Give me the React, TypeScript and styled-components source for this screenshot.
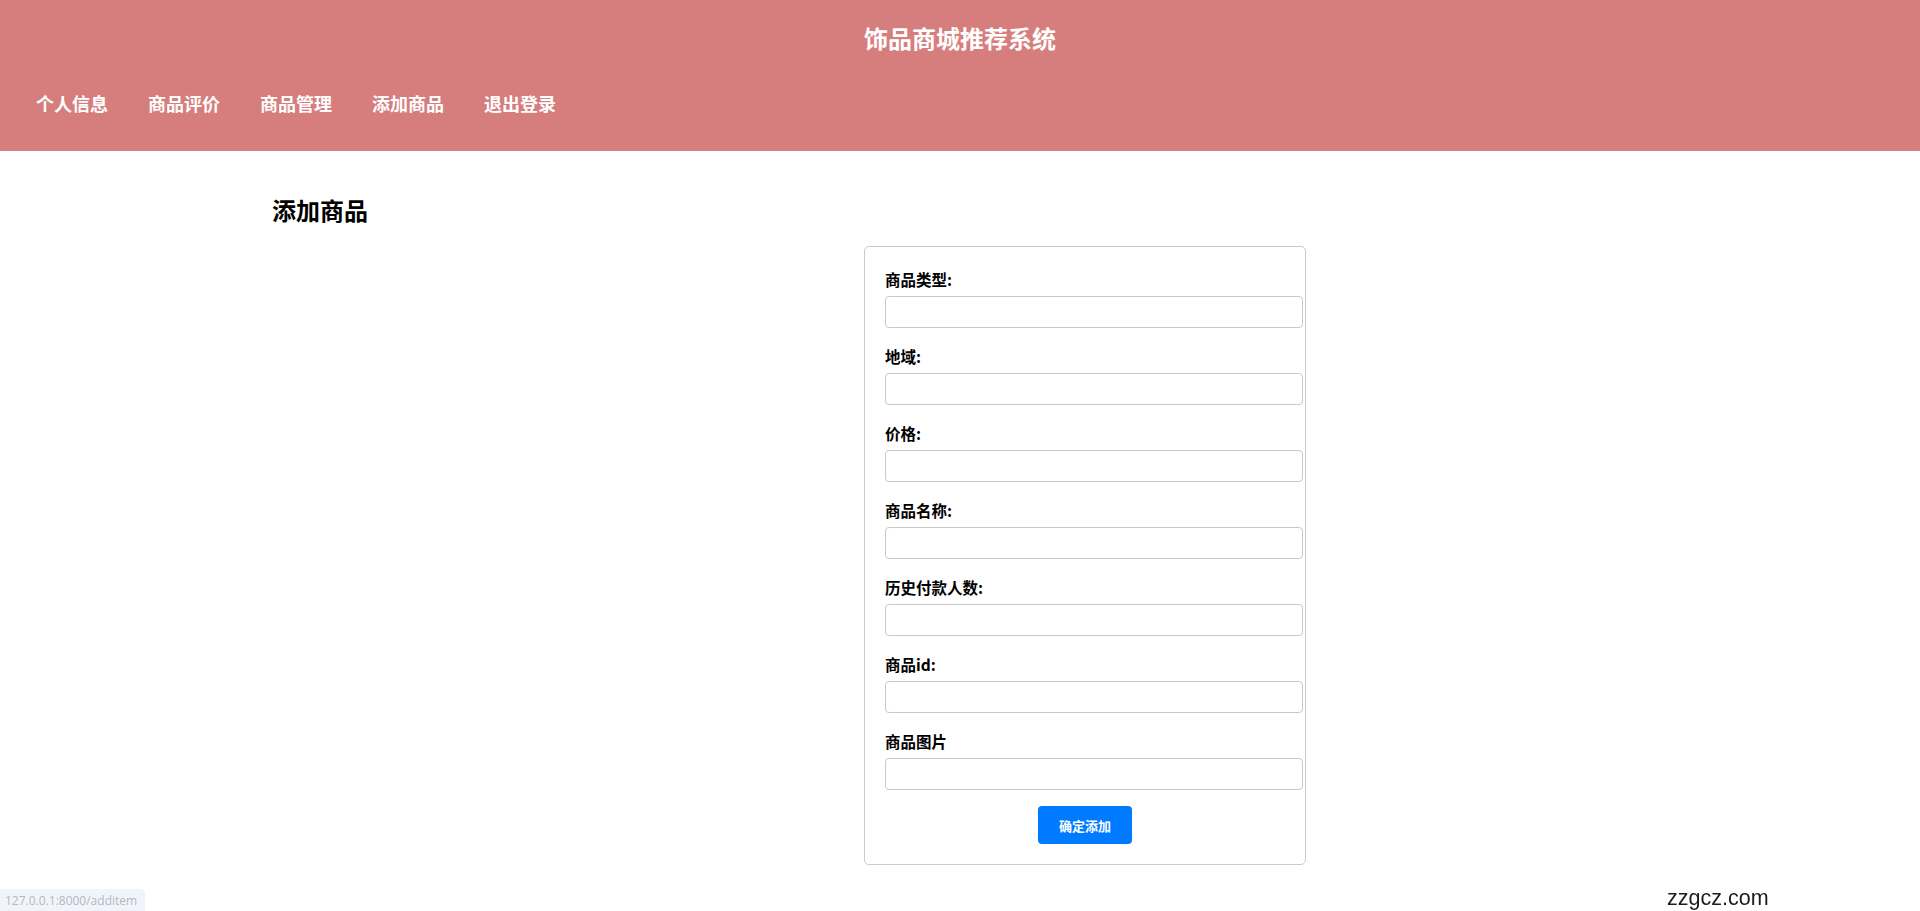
import React, { useState } from 'react'
import styled, { createGlobalStyle } from 'styled-components'

const GlobalStyle = createGlobalStyle`
	html, body {
		margin: 0;
		padding: 0;
		background: #ffffff;
		font-family: "Noto Sans CJK SC", "Noto Sans", "Liberation Sans", sans-serif;
	}
`

const Header = styled.header`
	height: 151px;
	background-color: #d67e7d;
	color: #ffffff;
	display: flex;
	flex-direction: column;
`

const Title = styled.h1`
	margin: 0;
	height: 74px;
	display: flex;
	align-items: center;
	justify-content: center;
	font-size: 24px;
	font-weight: 700;
`

const Nav = styled.nav`
	height: 48px;
	margin-top: 5px;
	display: flex;
	align-items: center;
	padding-left: 16px;
`

const NavLink = styled.a`
	padding: 0 20px;
	font-size: 18px;
	font-weight: 600;
	color: #ffffff;
	text-decoration: none;
	cursor: pointer;
	line-height: 48px;
`

const Main = styled.main`
	padding: 0 272px;
`

const PageTitle = styled.h2`
	margin: 44px 0 22px;
	font-size: 24px;
	line-height: 29px;
	font-weight: 700;
	color: #000000;
`

const FormRow = styled.div`
	display: flex;
	justify-content: center;
	padding-left: 250px;
`

const Card = styled.form`
	width: 400px;
	padding: 20px;
	border: 1px solid #cccccc;
	border-radius: 5px;
	background: #ffffff;
`

const Group = styled.div`
	margin-bottom: 16px;
`

const Label = styled.label`
	display: block;
	font-size: 15.5px;
	line-height: 24px;
	font-weight: 700;
	color: #000000;
	margin-bottom: 5px;
`

const Input = styled.input`
	display: block;
	box-sizing: content-box;
	width: 100%;
	height: 30px;
	padding: 0 8px;
	border: 1px solid #c8c8c8;
	border-radius: 4px;
	font-size: 14px;
	outline: none;

	&:focus {
		border-color: #80bdff;
	}
`

const SubmitButton = styled.button`
	display: block;
	margin: 0 auto;
	height: 38px;
	padding: 0 21px;
	border: none;
	border-radius: 4px;
	background-color: #007bff;
	color: #ffffff;
	font-family: inherit;
	font-size: 13px;
	font-weight: 600;
	cursor: pointer;
`

const StatusBar = styled.div`
	position: fixed;
	left: 0;
	bottom: 0;
	height: 22px;
	padding: 0 8px 0 5px;
	display: flex;
	align-items: center;
	background: #f1f5fb;
	border-top-right-radius: 5px;
	color: #b4b8bf;
	font-family: "Open Sans", "Liberation Sans", sans-serif;
	font-size: 12px;
`

const Watermark = styled.div`
	position: fixed;
	left: 1667px;
	bottom: 0;
	font-family: "Liberation Sans", Arial, sans-serif;
	font-size: 21.5px;
	color: #1c1c1c;
`

const navItems = ['个人信息', '商品评价', '商品管理', '添加商品', '退出登录']

const fields = [
	{ name: 'type', label: '商品类型:' },
	{ name: 'region', label: '地域:' },
	{ name: 'price', label: '价格:' },
	{ name: 'title', label: '商品名称:' },
	{ name: 'sales', label: '历史付款人数:' },
	{ name: 'id', label: '商品id:' },
	{ name: 'image', label: '商品图片' },
]

export default function App() {

	// States
	const [values, setValues] = useState<Record<string, string>>({})

	// Handlers
	const handleChange = (event: React.ChangeEvent<HTMLInputElement>) => {
		setValues({ ...values, [event.target.name]: event.target.value })
	}

	const handleSubmit = (event: React.FormEvent) => {
		event.preventDefault()
	}

	return (
		<>
			<GlobalStyle />
			<Header>
				<Title>饰品商城推荐系统</Title>
				<Nav>
					{navItems.map((item) => (
						<NavLink key={item}>{item}</NavLink>
					))}
				</Nav>
			</Header>
			<Main>
				<PageTitle>添加商品</PageTitle>
				<FormRow>
					<Card onSubmit={handleSubmit}>
						{fields.map((field) => (
							<Group key={field.name}>
								<Label htmlFor={field.name}>{field.label}</Label>
								<Input id={field.name} name={field.name} value={values[field.name] || ''} onChange={handleChange} />
							</Group>
						))}
						<SubmitButton type="submit">确定添加</SubmitButton>
					</Card>
				</FormRow>
			</Main>
			<StatusBar>127.0.0.1:8000/additem</StatusBar>
			<Watermark>zzgcz.com</Watermark>
		</>
	)
}
